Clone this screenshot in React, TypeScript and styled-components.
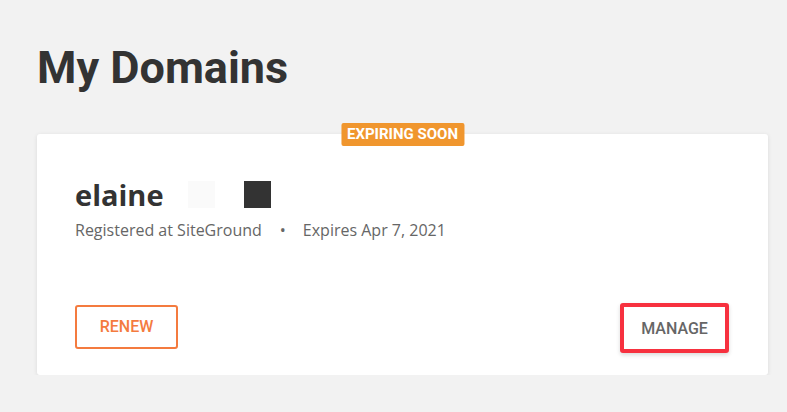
import React from 'react'
import styled, { createGlobalStyle } from 'styled-components'

const GlobalStyle = createGlobalStyle`
  html, body {
    margin: 0;
    padding: 0;
    background: #f2f2f2;
  }
`

const Page = styled.div`
  padding: 42px 19px 0 37px;
  display: flex;
  flex-direction: column;
`

const Title = styled.h1`
  margin: 0;
  font-family: Roboto, 'Liberation Sans', sans-serif;
  font-weight: 700;
  font-size: 45px;
  line-height: 52px;
  color: #333333;
`

const Card = styled.div`
  position: relative;
  margin-top: 40px;
  background: #ffffff;
  border-radius: 3px;
  box-shadow: 0 1px 4px rgba(0, 0, 0, 0.1);
  height: 241px;
  padding: 0 38px 22px 38px;
  box-sizing: border-box;
  display: flex;
  flex-direction: column;
`

const Badge = styled.div`
  position: absolute;
  top: -11px;
  left: 50%;
  transform: translateX(-50%);
  background: #f0962e;
  color: #ffffff;
  border-radius: 2px;
  padding: 0 6px;
  height: 23px;
  line-height: 23px;
  font-family: Roboto, 'Liberation Sans', sans-serif;
  font-weight: 700;
  font-size: 15px;
  text-transform: uppercase;
  white-space: nowrap;
`

const NameRow = styled.div`
  display: flex;
  align-items: center;
  margin-top: 44px;
  height: 32px;
`

const DomainName = styled.span`
  font-family: 'Open Sans', 'Liberation Sans', sans-serif;
  font-weight: 700;
  font-size: 29px;
  color: #333333;
  margin-right: 24px;
`

const Swatch = styled.span<{ $color: string }>`
  width: 27px;
  height: 27px;
  background: ${(p) => p.$color};
  margin-right: 29px;
`

const Meta = styled.div`
  display: flex;
  align-items: center;
  margin-top: 9px;
  font-family: 'Open Sans', 'Liberation Sans', sans-serif;
  font-size: 16px;
  color: #666666;
`

const Dot = styled.span`
  margin: 0 17px 0 18px;
`

const Actions = styled.div`
  margin-top: auto;
  display: flex;
  justify-content: space-between;
  align-items: center;
`

const RenewButton = styled.button`
  width: 103px;
  height: 44px;
  background: #ffffff;
  border: 2px solid #f47b3f;
  border-radius: 3px;
  color: #f47b3f;
  font-family: Roboto, 'Liberation Sans', sans-serif;
  font-weight: 500;
  font-size: 16px;
  text-transform: uppercase;
  padding: 0;
  margin-bottom: 3px;
`

const ManageButton = styled.button`
  width: 109px;
  height: 50px;
  background: #ffffff;
  border: 4px solid #f7313f;
  border-radius: 3px;
  box-shadow: 0 2px 4px rgba(0, 0, 0, 0.15);
  color: #666666;
  font-family: Roboto, 'Liberation Sans', sans-serif;
  font-weight: 500;
  font-size: 16px;
  text-transform: uppercase;
  padding: 0;
  margin-right: 1px;
`

export default function App() {
  return (
    <>
      <GlobalStyle />
      <Page>
        <Title>My Domains</Title>
        <Card>
          <Badge>Expiring soon</Badge>
          <NameRow>
            <DomainName>elaine</DomainName>
            <Swatch $color="#fafafa" />
            <Swatch $color="#333333" />
          </NameRow>
          <Meta>
            <span>Registered at SiteGround</span>
            <Dot>•</Dot>
            <span>Expires Apr 7, 2021</span>
          </Meta>
          <Actions>
            <RenewButton>Renew</RenewButton>
            <ManageButton>Manage</ManageButton>
          </Actions>
        </Card>
      </Page>
    </>
  )
}
